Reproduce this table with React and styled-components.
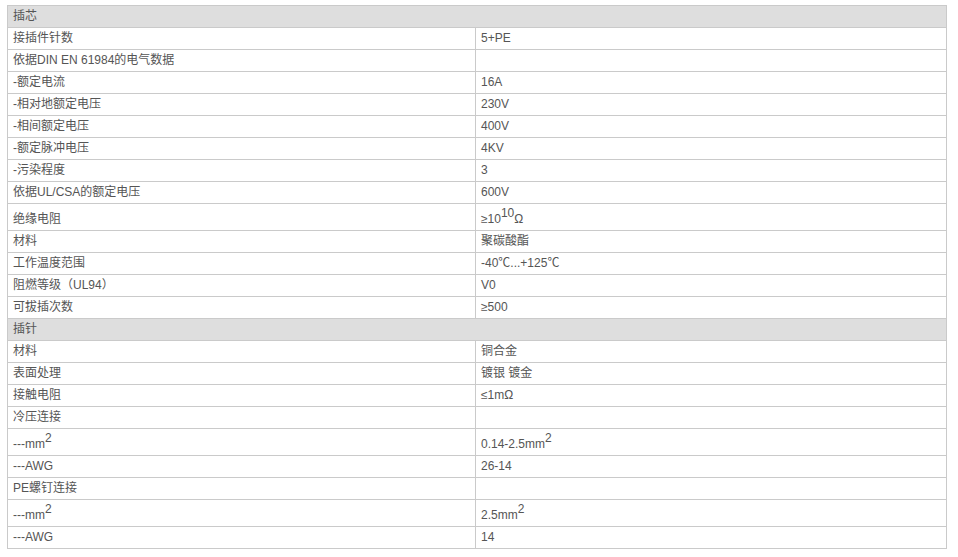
import React from "react";
import styled, { createGlobalStyle } from "styled-components";

const Global = createGlobalStyle`
  html, body { margin: 0; padding: 0; background: #fff; }
  body { font-family: "Liberation Sans", "Noto Sans CJK SC", sans-serif; }
`;

const Page = styled.div`
  padding: 5px 0 0 7px;
`;

const Table = styled.div`
  width: 940px;
  box-sizing: border-box;
  border: 1px solid #cacaca;
  border-bottom: none;
  font-size: 12px;
  color: #555;
`;

const Row = styled.div`
  display: grid;
  grid-template-columns: 468px 1fr;
  height: ${(p) => (p.$tall ? 26 : 21)}px;
  border-bottom: 1px solid #cacaca;
  background: #fff;
`;

const Section = styled.div`
  height: 21px;
  line-height: 21px;
  padding: 0 5px;
  background: #dedede;
  border-bottom: 1px solid #cacaca;
`;

const Cell = styled.div`
  padding: ${(p) => (p.$tall ? "4px 5px 0" : "0 5px")};
  line-height: ${(p) => (p.$tall ? 22 : 21)}px;
  white-space: nowrap;
  overflow: hidden;
  border-right: ${(p) => (p.$first ? "1px solid #cacaca" : "none")};
`;

const Sup = styled.sup`
  font-size: 12px;
  line-height: 0;
  vertical-align: 6px;
`;

const rows = [
  { h: "插芯" },
  ["接插件针数", "5+PE"],
  ["依据DIN EN 61984的电气数据", ""],
  ["-额定电流", "16A"],
  ["-相对地额定电压", "230V"],
  ["-相间额定电压", "400V"],
  ["-额定脉冲电压", "4KV"],
  ["-污染程度", "3"],
  ["依据UL/CSA的额定电压", "600V"],
  [
    "绝缘电阻",
    <>
      ≥10<Sup>10</Sup>Ω
    </>,
    true,
  ],
  ["材料", "聚碳酸酯"],
  ["工作温度范围", "-40℃...+125℃"],
  ["阻燃等级（UL94）", "V0"],
  ["可拔插次数", "≥500"],
  { h: "插针" },
  ["材料", "铜合金"],
  ["表面处理", "镀银 镀金"],
  ["接触电阻", "≤1mΩ"],
  ["冷压连接", ""],
  [
    <>
      ---mm<Sup>2</Sup>
    </>,
    <>
      0.14-2.5mm<Sup>2</Sup>
    </>,
    true,
  ],
  ["---AWG", "26-14"],
  ["PE螺钉连接", ""],
  [
    <>
      ---mm<Sup>2</Sup>
    </>,
    <>
      2.5mm<Sup>2</Sup>
    </>,
    true,
  ],
  ["---AWG", "14"],
];

export default function App() {
  return (
    <>
      <Global />
      <Page>
        <Table>
          {rows.map((r, i) =>
            r.h ? (
              <Section key={i}>{r.h}</Section>
            ) : (
              <Row key={i} $tall={r[2]}>
                <Cell $first $tall={r[2]}>{r[0]}</Cell>
                <Cell $tall={r[2]}>{r[1]}</Cell>
              </Row>
            )
          )}
        </Table>
      </Page>
    </>
  );
}
